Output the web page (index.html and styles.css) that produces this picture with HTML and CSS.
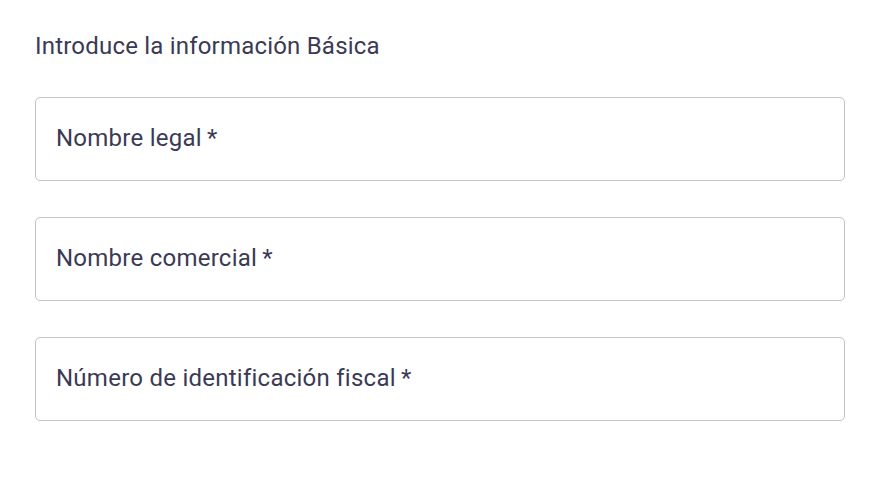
FILE: index.html
```html
<!DOCTYPE html>
<html lang="es">
<head>
<meta charset="utf-8">
<link rel="stylesheet" href="styles.css">
</head>
<body>
<div class="page">
  <p class="title">Introduce la información Básica</p>
  <div class="fields">
    <div class="field"><span class="label">Nombre legal<span class="req">&thinsp;*</span></span></div>
    <div class="field"><span class="label">Nombre comercial<span class="req">&thinsp;*</span></span></div>
    <div class="field"><span class="label">Número de identificación fiscal<span class="req">&thinsp;*</span></span></div>
  </div>
</div>
</body>
</html>
```
FILE: styles.css
```css
html, body {
  margin: 0;
  padding: 0;
  background: #ffffff;
}
body {
  font-family: Roboto, "Noto Sans", sans-serif;
  color: #3b3a55;
}
.page {
  padding: 32px 32px 0 35px;
  width: 810px;
}
.title {
  margin: 0;
  font-size: 24px;
  line-height: 28px;
  letter-spacing: 0.2px;
}
.fields {
  margin-top: 37px;
  display: flex;
  flex-direction: column;
  gap: 36px;
}
.field {
  height: 82px;
  border: 1px solid #c4c4c4;
  border-radius: 5px;
  display: flex;
  align-items: center;
  padding-left: 20px;
  padding-bottom: 2px;
  box-sizing: content-box;
}
.field {
  height: 80px;
}
.label {
  font-size: 24px;
  line-height: 30px;
  letter-spacing: 0.25px;
}
```
